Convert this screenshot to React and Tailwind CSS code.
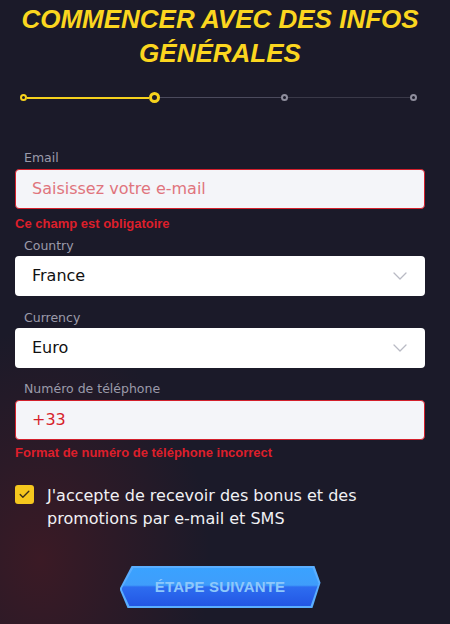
import { Check } from "lucide-react";

const font = { fontFamily: '"Liberation Sans", Arial, sans-serif' };
const wide = { fontFamily: '"DejaVu Sans", "Liberation Sans", sans-serif' };

const Chevron = () => (
  <svg width="14" height="8" viewBox="0 0 14 8" fill="none" className="shrink-0">
    <path d="M1 1l6 6 6-6" stroke="#b9bac4" strokeWidth="1.3" strokeLinecap="round" strokeLinejoin="round" />
  </svg>
);

const Label = ({ children, className = "" }) => (
  <p style={wide} className={`pl-[9px] text-[12.5px] leading-[16px] text-[#9b9aaa] ${className}`}>{children}</p>
);

const ErrorText = ({ children, className = "" }) => (
  <p className={`text-[13px] leading-[16px] font-bold text-[#dc1f2b] ${className}`}>{children}</p>
);

const Stepper = () => (
  <div className="flex items-center mt-[22px] ml-[20px] w-[397px] h-[11px]">
    <span className="w-[7px] h-[7px] rounded-full border-2 border-[#f6d21d] bg-[#1b1a29] shrink-0" />
    <span className="flex-1 h-[2px] bg-[#f6d21d]" />
    <span className="w-[11px] h-[11px] rounded-full border-[3px] border-[#f6d21d] bg-[#1b1a29] shrink-0" />
    <span className="flex-1 h-px bg-[#4b4a5c]" />
    <span className="w-[7px] h-[7px] rounded-full border-2 border-[#8e8d9c] bg-[#1b1a29] shrink-0" />
    <span className="flex-1 h-px bg-[#3a3948]" />
    <span className="w-[7px] h-[7px] rounded-full border-2 border-[#8e8d9c] bg-[#1b1a29] shrink-0" />
  </div>
);

const SelectBox = ({ value, className = "" }) => (
  <div className={`flex items-center justify-between h-[40px] rounded-[4px] bg-white pl-[17px] pr-[18px] ${className}`}>
    <span style={wide} className="text-[16px] text-[#111111]">{value}</span>
    <Chevron />
  </div>
);

export default function App() {
  return (
    <div
      style={font}
      className="relative w-[450px] h-[624px] overflow-hidden bg-[#1b1a29] bg-[radial-gradient(ellipse_170px_230px_at_40px_560px,#3b1a25_0%,#2c1a27_45%,#1b1a29_100%)]"
    >
      <h1 className="w-[440px] pt-[2px] text-center text-[26px] leading-[34px] font-bold italic uppercase text-[#fbd61f]">
        Commencer avec des infos
        <br />
        générales
      </h1>

      <Stepper />

      <div className="ml-[15px] w-[410px] mt-[47px]">
        <Label>Email</Label>
        <div className="mt-[3px] flex items-center h-[40px] rounded-[4px] bg-[#f4f5f9] border border-[#d3202c] pl-[16px]">
          <span style={wide} className="text-[16px] text-[#e0747d]">Saisissez votre e-mail</span>
        </div>
        <ErrorText className="mt-[7px]">Ce champ est obligatoire</ErrorText>

        <Label className="mt-[6px]">Country</Label>
        <SelectBox value="France" className="mt-[2px]" />

        <Label className="mt-[14px]">Currency</Label>
        <SelectBox value="Euro" className="mt-[2px]" />

        <Label className="mt-[13px]">Numéro de téléphone</Label>
        <div className="mt-[3px] flex items-center h-[40px] rounded-[4px] bg-[#f4f5f9] border border-[#d3202c] pl-[16px]">
          <span style={wide} className="text-[16px] text-[#d71f2c]">+33</span>
        </div>
        <ErrorText className="mt-[5px]">Format de numéro de téléphone incorrect</ErrorText>

        <div className="mt-[23px] flex items-start gap-[13px]">
          <span className="mt-[1px] flex items-center justify-center w-[19px] h-[19px] rounded-[3px] bg-[#f5c71e] shrink-0">
            <Check size={13} strokeWidth={2.5} color="#3a2f1a" />
          </span>
          <p style={wide} className="text-[16px] leading-[23px] text-[#f1f1f4]">
            J'accepte de recevoir des bonus et des
            <br />
            promotions par e-mail et SMS
          </p>
        </div>
      </div>

      <div className="flex justify-center mt-[36px] pr-[10px]">
        <div className="w-[201px] h-[42px] p-[2px] bg-[#5aaeff] [clip-path:polygon(6%_0,97%_0,100%_40%,96%_100%,4%_100%,0_55%)]">
          <div className="w-full h-full flex items-center justify-center bg-[linear-gradient(180deg,#3aa2ff_0%,#3f9dfb_45%,#2d6df0_50%,#2356e4_100%)] [clip-path:polygon(6%_0,97%_0,100%_40%,96%_100%,4%_100%,0_55%)]">
            <span className="text-[15px] font-bold uppercase text-[#8ec8fb] tracking-[0.2px]">Étape suivante</span>
          </div>
        </div>
      </div>
    </div>
  );
}
